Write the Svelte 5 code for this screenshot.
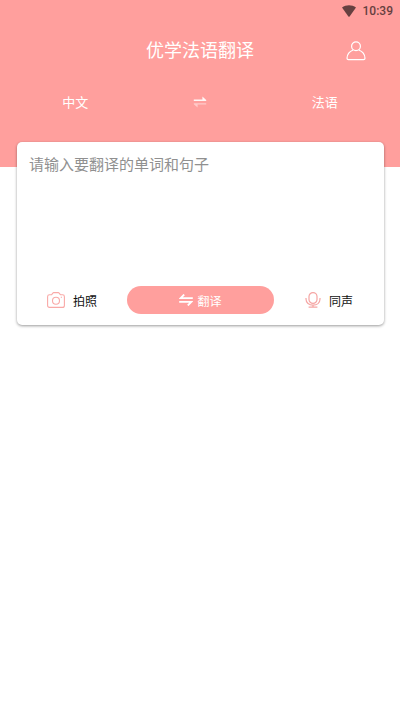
<script>
  let source = $state('中文');
  let target = $state('法语');
  let text = $state('');

  function swap() {
    [source, target] = [target, source];
  }
</script>

<div class="page">
  <header>
    <div class="status">
      <svg width="14" height="12" viewBox="0 0 14 12">
        <path d="M0 2.6C4 -0.5 10 -0.5 14 2.6L7.6 11.4Q7 12 6.4 11.4Z" fill="#664040" />
      </svg>
      <span>10:39</span>
    </div>

    <div class="title-bar">
      <h1>优学法语翻译</h1>
      <button class="user" aria-label="我的">
        <svg width="20" height="20" viewBox="0 0 20 20" fill="none" stroke="#fff" stroke-width="1.2">
          <circle cx="10" cy="5.3" r="4.4" />
          <path d="M7.2 9C3.6 10.3 1.2 13.5 1 17.2Q1 18.6 2.4 18.6H17.6Q19 18.6 19 17.2C18.8 13.5 16.4 10.3 12.8 9" />
        </svg>
      </button>
    </div>

    <div class="languages">
      <button>{source}</button>
      <button aria-label="交换语言" onclick={swap}>
        <svg width="14" height="12" viewBox="0 0 14 12">
          <path d="M.8 4.9H13.2V4L9.4 .6V3.5H.8Z" fill="#fff" opacity="0.9" />
          <path d="M13.2 7.3H.8V8.2L4.6 11.6V8.5H13.2Z" fill="#fff" opacity="0.45" />
        </svg>
      </button>
      <button>{target}</button>
    </div>
  </header>

  <main>
    <textarea bind:value={text} placeholder="请输入要翻译的单词和句子" aria-label="翻译内容"></textarea>

    <div class="actions">
      <button class="tool">
        <svg width="18" height="16" viewBox="0 0 18 16" fill="none" stroke="#f9a9a7" stroke-width="1.1">
          <path d="M2.5 2.8H4.6L5.8 1.1Q6.1 .6 6.7 .6H11.3Q11.9 .6 12.2 1.1L13.4 2.8H15.5Q17.4 2.8 17.4 4.7V13.4Q17.4 15.4 15.5 15.4H2.5Q.6 15.4 .6 13.4V4.7Q.6 2.8 2.5 2.8Z" />
          <circle cx="9" cy="8.7" r="3.5" />
          <path d="M13.8 5.2H15" />
        </svg>
        拍照
      </button>
      <button class="translate">
        <svg width="14" height="12" viewBox="0 0 14 12" fill="none" stroke="#fff" stroke-width="1.8">
          <path d="M13.8 4.2H1.6L5.2 .5M.2 7.8H12.4L8.8 11.5" />
        </svg>
        翻译
      </button>
      <button class="tool">
        <svg width="16" height="16" viewBox="0 0 16 16" fill="none" stroke="#f5a5a3" stroke-width="1.2">
          <rect x="4" y=".6" width="8" height="10.8" rx="4" />
          <path d="M1 6V7C1 10.8 4 13.2 8 13.2S15 10.8 15 7V6M8 13.2V15.2M3.6 15.2H12.4" />
        </svg>
        同声
      </button>
    </div>
  </main>
</div>

<style>
  :global(body) {
    background: #fff;
    font-family: Roboto, "Noto Sans CJK SC", sans-serif;
  }

  .page {
    min-height: 100vh;
  }

  header {
    box-sizing: border-box;
    height: 167px;
    background: #ff9f9d;
    color: #fff;
  }

  button {
    display: flex;
    align-items: center;
    justify-content: center;
    padding: 0;
    border: none;
    background: none;
    color: inherit;
    font-family: inherit;
    cursor: pointer;
  }

  .status {
    display: flex;
    align-items: center;
    justify-content: flex-end;
    gap: 7px;
    height: 22px;
    padding-right: 7px;
    color: #664040;
    font-size: 12px;
    font-weight: 500;
  }

  .title-bar {
    display: grid;
    grid-template-columns: 1fr auto 1fr;
    align-items: center;
    height: 58px;
    padding: 0 34px;
  }

  h1 {
    grid-column: 2;
    margin: 0;
    font-size: 18px;
    font-weight: 400;
    line-height: 24px;
  }

  .user {
    justify-self: end;
  }

  .languages {
    display: grid;
    grid-template-columns: repeat(3, 1fr);
    height: 43px;
    padding: 0 13px;
  }

  .languages button {
    font-size: 13px;
  }

  main {
    margin: -25px 16px 0 17px;
    padding-bottom: 11px;
    border-radius: 5px;
    background: #fff;
    box-shadow: 0 1px 3px rgba(0, 0, 0, 0.4);
  }

  textarea {
    display: block;
    box-sizing: border-box;
    width: 100%;
    height: 144px;
    padding: 12px;
    border: none;
    outline: none;
    background: none;
    color: #333;
    font-family: inherit;
    font-size: 15px;
    line-height: 22px;
    resize: none;
  }

  textarea::placeholder {
    color: #909090;
    opacity: 1;
  }

  .actions {
    display: grid;
    grid-template-columns: 3fr 4fr 3fr;
    align-items: center;
  }

  .actions button {
    gap: 8px;
    height: 28px;
    color: #111;
    font-size: 12px;
  }

  .actions .translate {
    gap: 4px;
    border-radius: 14px;
    background: #ff9f9d;
    color: #fff;
  }
</style>
